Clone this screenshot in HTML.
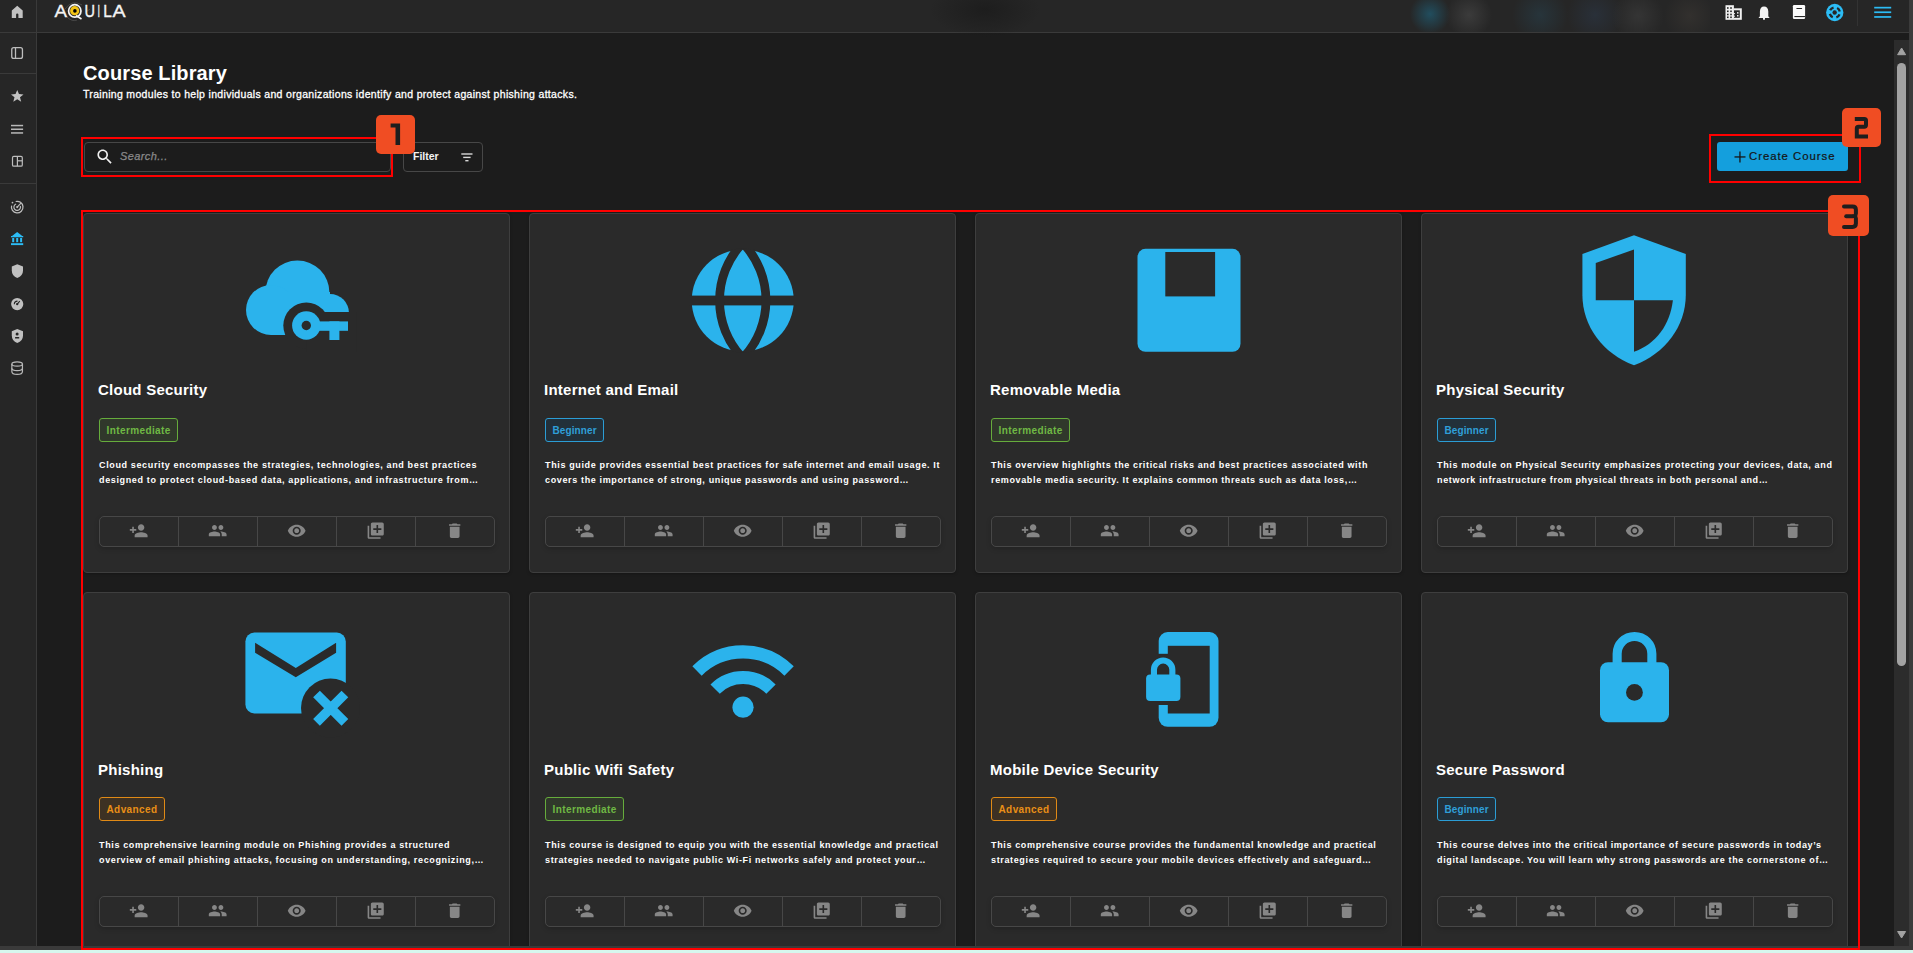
<!DOCTYPE html>
<html><head><meta charset="utf-8">
<style>
*{box-sizing:border-box;margin:0;padding:0}
html,body{width:1913px;height:953px;overflow:hidden;background:#1c1c1c;font-family:"Liberation Sans",sans-serif;color:#fff}
.abs{position:absolute}
#side{left:0;top:0;width:37px;height:946px;background:#262626;border-right:1px solid #3a3a3a}
.hl{position:absolute;left:0;height:1px;background:#3a3a3a}
#hdr{left:37px;top:0;width:1872px;height:33px;background:#262626;border-bottom:1px solid #3a3a3a}
#rstrip{left:1909px;top:0;width:4px;height:953px;background:#3b3b3b}
#bstrip{left:0;top:946px;width:1913px;height:4px;background:#3a3a3a}
#mint{left:0;top:950px;width:1913px;height:3px;background:#d6f7ee}
#sbtrack{left:1894px;top:40px;width:15px;height:906px;background:#2c2c2c}
#thumb{left:1897px;top:63px;width:9px;height:603px;background:#a3a3a3;border-radius:5px}
h1{position:absolute;left:83px;top:61px;font-size:20px;font-weight:700;line-height:24px;white-space:nowrap;letter-spacing:0.12px}
.sub{position:absolute;left:83px;top:88px;font-size:10.5px;line-height:13px;white-space:nowrap;letter-spacing:0.32px;-webkit-text-stroke:0.3px #fff}
.search{left:84px;top:142px;width:307px;height:30px;border:1px solid #474747;border-radius:4px;background:#1c1c1c}
.filter{left:403px;top:142px;width:80px;height:30px;border:1px solid #474747;border-radius:4px}
.btn{left:1717px;top:142px;width:131px;height:29px;background:#149fdd;border-radius:3px;color:#1c1c1c;font-size:12.5px;line-height:29px}
.card{position:absolute;width:426.5px;height:360px;background:#2a2a2a;border:1px solid #3e3e3e;border-radius:4px;box-shadow:0 1px 3px rgba(0,0,0,.25)}
.card .t{position:absolute;left:14px;top:167px;font-size:15px;font-weight:700;line-height:18px;white-space:nowrap;letter-spacing:0.25px}
.card .b{position:absolute;left:15px;top:204px;height:24px;border:1px solid;border-radius:3px;font-size:10px;font-weight:700;line-height:24px;padding:0 6.5px;white-space:nowrap;letter-spacing:0.4px}
.g{color:#6fb944;border-color:#66ac3c!important;background:#30382b}
.bl{color:#2f9fd8;border-color:#2b9dd5!important;background:#22303a}
.o{color:#e98f17;border-color:#e08a16!important;background:#3d3123}
.card .d{position:absolute;left:15px;top:244px;white-space:nowrap;font-size:9px;font-weight:700;line-height:15.2px;letter-spacing:0.64px}
.card .ab{position:absolute;left:15px;top:302px;width:396px;height:31px;border:1px solid #474747;border-radius:5px;display:flex;box-shadow:0 2px 5px rgba(0,0,0,.18)}
.card .ab div{flex:1;border-right:1px solid #474747;display:flex;align-items:center;justify-content:center}
.card .ab div:last-child{border-right:none}
.card .ic{position:absolute;left:0;top:0}
.r2 .t,.r2 .d,.r2 .ab{margin-top:1px}
.bl{letter-spacing:0.1px!important}
.red{position:absolute;border:2px solid #ff0000}
.num{position:absolute;background:#f04e23;border-radius:5px}
</style></head><body>
<div id="side" class="abs"></div>
<div class="hl" style="top:32px;width:37px"></div>
<div class="hl" style="top:73px;width:37px"></div>
<div class="hl" style="top:183px;width:37px"></div>
<div id="hdr" class="abs"></div>
<div id="rstrip" class="abs"></div>
<div id="sbtrack" class="abs"></div>
<div id="thumb" class="abs"></div>
<div id="bstrip" class="abs"></div>
<div id="mint" class="abs"></div>


<!-- sidebar icons -->
<svg class="abs" style="left:0;top:0" width="37" height="400" viewBox="0 0 37 400">
<g fill="#c2c2c2">
<path d="M11.8 10.6 L17.25 5.7 L22.7 10.6 V17.9 H18.4 V14.6 Q18.4 13.6 17.25 13.6 Q16.1 13.6 16.1 14.6 V17.9 H11.8 Z"/>
</g>
<g fill="none" stroke="#bdbdbd" stroke-width="1.3">
<rect x="11.75" y="47.65" width="10.7" height="10.8" rx="2"/>
<line x1="15.5" y1="47.6" x2="15.5" y2="58.5"/>
</g>
<path fill="#c2c2c2" d="M17.25 89.9 L18.95 94.1 L23.5 94.4 L20 97.3 L21.2 101.8 L17.25 99.3 L13.3 101.8 L14.5 97.3 L11 94.4 L15.55 94.1 Z"/>
<g fill="#b8b8b8"><rect x="11" y="124.8" width="12.1" height="1.5"/><rect x="11" y="128.5" width="12.1" height="1.5"/><rect x="11" y="132.2" width="12.1" height="1.5"/></g>
<g fill="none" stroke="#bdbdbd" stroke-width="1.2">
<rect x="12.5" y="156.4" width="9.8" height="9.8" rx="1.3"/>
<line x1="17.4" y1="156.4" x2="17.4" y2="166.2"/><line x1="17.4" y1="160.8" x2="22.3" y2="160.8"/>
</g>
<g><path d="M15.7 201.5 A5.8 5.8 0 1 1 11.6 205.6" fill="none" stroke="#bdbdbd" stroke-width="1.25"/>
<path d="M20.3 206 A3.3 3.3 0 1 1 16.1 204" fill="none" stroke="#bdbdbd" stroke-width="1.2"/>
<line x1="17.2" y1="207.1" x2="21.2" y2="202.8" stroke="#bdbdbd" stroke-width="1.2"/>
</g>
<circle cx="17.2" cy="207.1" r="1.1" fill="#bdbdbd"/><circle cx="12.5" cy="202.6" r="0.9" fill="#bdbdbd"/>
<g fill="#2cbcf5">
<path d="M11 236.8 L17.2 231.9 L23.2 236.8 Z"/><rect x="11" y="236" width="12.2" height="1.3"/>
<rect x="12.2" y="238" width="2" height="4.2"/><rect x="16.2" y="238" width="2" height="4.2"/><rect x="20.1" y="238" width="2" height="4.2"/>
<rect x="11" y="243.2" width="12.2" height="1.9"/>
</g>
<path fill="#c0c0c0" d="M17.25 264.3 L23 266.6 V270.6 Q23 276 17.25 277.9 Q11.8 276 11.8 270.6 V266.6 Z"/>
<circle cx="17.2" cy="304.1" r="6.1" fill="#c0c0c0"/>
<g fill="none" stroke="#262626" stroke-width="1.1"><path d="M14.3 304.3 A3.2 3.2 0 0 1 17.5 301.1"/><line x1="17.2" y1="304.1" x2="19.8" y2="301.2"/></g>
<circle cx="17.2" cy="304.1" r="1.2" fill="#262626"/>
<path fill="#c0c0c0" d="M17.25 329 L23 331.2 V335.4 Q23 340.9 17.25 342.9 Q11.8 340.9 11.8 335.4 V331.2 Z"/>
<circle cx="17.1" cy="333.9" r="1.5" fill="#262626"/><rect x="15" y="337" width="4.3" height="1.5" rx="0.6" fill="#262626"/>
<g fill="none" stroke="#b8b8b8" stroke-width="1.2">
<ellipse cx="17.15" cy="364" rx="5.3" ry="2.2"/>
<path d="M11.85 364 V371.5 Q11.85 374.4 17.15 374.4 Q22.45 374.4 22.45 371.5 V364"/>
<path d="M11.85 368.2 Q11.85 370.6 17.15 370.6 Q22.45 370.6 22.45 368.2"/>
</g>
</svg>

<!-- logo -->
<svg class="abs" style="left:50px;top:0" width="80" height="26" viewBox="0 0 80 26">
<g fill="none" stroke="#6b6b6b" stroke-width="0.6" opacity="0.8"><path d="M15 9 Q22 -1 32 5"/><path d="M17 17 Q22 22 27 20"/><path d="M36 12 L40 9"/></g>
<g font-family="Liberation Sans" font-size="16.8" fill="#f4f4f4" stroke="#f4f4f4" stroke-width="0.35">
<text x="4.4" y="16.9" textLength="12.5" lengthAdjust="spacingAndGlyphs">A</text>
<text x="34.5" y="16.9" textLength="10.5" lengthAdjust="spacingAndGlyphs">U</text>
<text x="47.4" y="16.9" textLength="2.5" lengthAdjust="spacingAndGlyphs">I</text>
<text x="53.3" y="16.9" textLength="8.6" lengthAdjust="spacingAndGlyphs">L</text>
<text x="62.5" y="16.9" textLength="13.1" lengthAdjust="spacingAndGlyphs">A</text>
</g>
<circle cx="24.8" cy="10.9" r="6.2" fill="none" stroke="#f4f4f4" stroke-width="1.7"/>
<path d="M26 15.5 L31.5 19" stroke="#f4f4f4" stroke-width="1.7"/>
<circle cx="24.7" cy="10.7" r="4.6" fill="#f2c316"/>
<circle cx="24.9" cy="10.9" r="1.8" fill="#000"/>
</svg>

<!-- header blurred blobs -->
<div class="abs" style="left:1400px;top:0;width:310px;height:32px;overflow:hidden">
<div class="abs" style="left:8px;top:-8px;width:44px;height:44px;border-radius:50%;background:radial-gradient(circle,rgba(30,110,140,.55),rgba(30,110,140,0) 65%)"></div>
<div class="abs" style="left:44px;top:-10px;width:50px;height:50px;border-radius:50%;background:radial-gradient(circle,rgba(80,80,80,.5),rgba(80,80,80,0) 65%)"></div>
<div class="abs" style="left:105px;top:-10px;width:70px;height:50px;border-radius:50%;background:radial-gradient(circle,rgba(40,70,85,.45),rgba(40,70,85,0) 65%)"></div>
<div class="abs" style="left:160px;top:-10px;width:70px;height:50px;border-radius:50%;background:radial-gradient(circle,rgba(45,60,80,.45),rgba(45,60,80,0) 65%)"></div>
<div class="abs" style="left:210px;top:-12px;width:56px;height:56px;border-radius:50%;background:radial-gradient(circle,rgba(70,70,70,.45),rgba(70,70,70,0) 65%)"></div>
<div class="abs" style="left:262px;top:-12px;width:56px;height:56px;border-radius:50%;background:radial-gradient(circle,rgba(65,60,55,.45),rgba(65,60,55,0) 65%)"></div>
</div>

<div class="abs" style="left:925px;top:-20px;width:120px;height:60px;border-radius:50%;background:radial-gradient(ellipse,rgba(22,22,22,.55),rgba(22,22,22,0) 65%)"></div>
<!-- header icons -->
<svg class="abs" style="left:1710px;top:0" width="199" height="32" viewBox="1710 0 199 32">
<g fill="#f0f0f0">
<rect x="1725.5" y="5.2" width="8.4" height="14.6"/><rect x="1733.5" y="8.3" width="8.3" height="11.5"/>
</g>
<g fill="#262626">
<rect x="1727" y="7.2" width="1.6" height="1.6"/><rect x="1730.2" y="7.2" width="1.6" height="1.6"/>
<rect x="1727" y="10.5" width="1.6" height="1.6"/><rect x="1730.2" y="10.5" width="1.6" height="1.6"/>
<rect x="1727" y="13.7" width="1.6" height="1.6"/><rect x="1730.2" y="13.7" width="1.6" height="1.6"/>
<rect x="1727" y="16.5" width="1.6" height="1.6"/><rect x="1730.2" y="16.5" width="1.6" height="1.6"/>
<rect x="1734" y="10.3" width="5.8" height="7.5"/>
</g>
<g fill="#f0f0f0"><rect x="1737" y="12.1" width="1.5" height="1.5"/><rect x="1737" y="15" width="1.5" height="1.5"/><rect x="1733.5" y="13" width="1.4" height="1.2"/><rect x="1733.5" y="15.6" width="1.4" height="1.2"/></g>
<path fill="#f4f4f4" d="M1764 6.6 Q1768 6.6 1768.3 11.5 V16.3 L1769.7 17.9 H1758.5 L1759.9 16.3 V11.5 Q1760.2 6.6 1764 6.6 Z"/>
<rect x="1763" y="17.5" width="2" height="2.4" rx="0.8" fill="#f4f4f4"/>
<rect x="1792.9" y="5" width="12.2" height="14" rx="1.2" fill="#fafafa"/>
<rect x="1796.3" y="8" width="5.8" height="1.1" rx="0.5" fill="#262626"/>
<rect x="1794.4" y="16" width="10.7" height="1.1" fill="#262626"/>
<circle cx="1834.75" cy="12.5" r="8.65" fill="#2cbcf5"/>
<circle cx="1834.75" cy="12.5" r="5.1" fill="none" stroke="#262626" stroke-width="2.3" stroke-dasharray="4.3 3.71" stroke-dashoffset="-1.85"/>
<circle cx="1834.65" cy="12.45" r="2.2" fill="#262626"/>
<rect x="1857" y="0" width="1" height="26" fill="#333"/>
<g fill="#2cbcf5"><rect x="1874.2" y="6.8" width="17" height="1.7"/><rect x="1874.2" y="11.4" width="17" height="1.7"/><rect x="1874.2" y="16.1" width="17" height="1.7"/></g>
</svg>

<!-- scrollbar arrows -->
<svg class="abs" style="left:1894px;top:40px" width="15" height="906" viewBox="0 0 15 906">
<path d="M3.6 14.7 L7.6 8 L11.6 14.7 Z" fill="#a3a3a3" stroke="#a3a3a3" stroke-width="1" stroke-linejoin="round"/>
<path d="M3.6 891.5 L7.6 898 L11.6 891.5 Z" fill="#a3a3a3" stroke="#a3a3a3" stroke-width="1" stroke-linejoin="round"/>
</svg>

<h1>Course Library</h1>
<div class="sub">Training modules to help individuals and organizations identify and protect against phishing attacks.</div>

<div class="search abs"><svg class="abs" style="left:9.6px;top:3.7px" width="19.5" height="19.5" viewBox="0 0 24 24"><path fill="#f0f0f0" d="M15.5 14h-.79l-.28-.27C15.41 12.59 16 11.11 16 9.5 16 5.91 13.09 3 9.5 3S3 5.91 3 9.5 5.91 16 9.5 16c1.61 0 3.09-.59 4.23-1.57l.27.28v.79l5 4.99L20.49 19l-4.99-5zm-6 0C7.01 14 5 11.99 5 9.5S7.01 5 9.5 5 14 7.01 14 9.5 11.99 14 9.5 14z"/></svg>
<div class="abs" style="left:35px;top:6px;font-size:11px;font-style:italic;color:#8a8a8a;line-height:14px;letter-spacing:0.4px;-webkit-text-stroke:0.25px #8a8a8a">Search...</div></div>
<div class="filter abs"><div class="abs" style="left:9px;top:6px;font-size:10.5px;font-weight:700;color:#f4f4f4;line-height:14px">Filter</div>
<svg class="abs" style="left:57px;top:10px" width="12" height="9" viewBox="0 0 12 9"><g fill="#d8d8d8"><rect x="0.3" y="0.3" width="11.2" height="1.4"/><rect x="2.2" y="3.7" width="7.4" height="1.4"/><rect x="4.3" y="7" width="3.2" height="1.4"/></g></svg></div>
<div class="btn abs"><svg class="abs" style="left:16.5px;top:8.5px" width="12" height="12" viewBox="0 0 12 12"><g fill="#161616"><rect x="0.5" y="5.3" width="11" height="1.3"/><rect x="5.3" y="0.5" width="1.3" height="11"/></g></svg>
<div class="abs" style="left:32px;top:7px;font-size:11.4px;line-height:14px;letter-spacing:0.95px;color:#141414;white-space:nowrap;-webkit-text-stroke:0.2px #141414">Create Course</div></div>

<div class="abs" style="left:37px;top:33px;width:1857px;height:913px;overflow:hidden"><div class="abs" style="left:-37px;top:-33px;width:1913px;height:953px"><div class="card" style="left:83px;top:213px">
<svg class="ic" width="426" height="170" viewBox="0 0 426 170" style="left:-1px;top:-1px"><circle cx="214.4" cy="79.5" r="32" fill="#2bb3ec"/>
<circle cx="247" cy="100" r="19" fill="#2bb3ec"/>
<circle cx="188" cy="97" r="25" fill="#2bb3ec"/>
<rect x="188" y="79" width="59" height="43" fill="#2bb3ec"/>
<circle cx="223.3" cy="112.5" r="23" fill="#2a2a2a"/>
<rect x="223.3" y="99" width="50" height="40" fill="#2a2a2a"/>
<rect x="223.3" y="108.4" width="41.7" height="9.4" fill="#2bb3ec"/>
<circle cx="223.3" cy="112.5" r="14.2" fill="#2bb3ec"/>
<circle cx="223.3" cy="112.5" r="4.7" fill="#2a2a2a"/>
<rect x="246.4" y="108.4" width="10" height="18.6" fill="#2bb3ec"/></svg>
<div class="t">Cloud Security</div>
<div class="b g">Intermediate</div>
<div class="d">Cloud security encompasses the strategies, technologies, and best practices<br>designed to protect cloud-based data, applications, and infrastructure from&hellip;</div>
<div class="ab"><div><svg width="19.4" height="19.4" viewBox="0 0 24 24" style="margin-top:-1px"><path d="M15 12c2.21 0 4-1.79 4-4s-1.79-4-4-4-4 1.79-4 4 1.79 4 4 4zm-9-2V7H4v3H1v2h3v3h2v-3h3v-2H6zm9 4c-2.67 0-8 1.34-8 4v2h16v-2c0-2.66-5.33-4-8-4z" fill="#868686"/></svg></div><div><svg width="19.4" height="19.4" viewBox="0 0 24 24" style="margin-top:-1px"><path d="M16 11c1.66 0 2.99-1.34 2.99-3S17.66 5 16 5c-1.66 0-3 1.34-3 3s1.34 3 3 3zm-8 0c1.66 0 2.99-1.34 2.99-3S9.66 5 8 5C6.34 5 5 6.34 5 8s1.34 3 3 3zm0 2c-2.33 0-7 1.17-7 3.5V19h14v-2.5c0-2.33-4.67-3.5-7-3.5zm8 0c-.29 0-.62.02-.97.05 1.16.84 1.970 1.97 1.97 3.45V19h6v-2.5c0-2.33-4.67-3.5-7-3.5z" fill="#868686"/></svg></div><div><svg width="19.4" height="19.4" viewBox="0 0 24 24" style="margin-top:-1px"><path d="M12 4.5C7 4.5 2.73 7.61 1 12c1.73 4.39 6 7.5 11 7.5s9.27-3.11 11-7.5c-1.73-4.39-6-7.5-11-7.5zM12 17c-2.76 0-5-2.24-5-5s2.24-5 5-5 5 2.24 5 5-2.24 5-5 5zm0-8c-1.66 0-3 1.34-3 3s1.34 3 3 3 3-1.34 3-3-1.34-3-3-3z" fill="#868686"/></svg></div><div><svg width="19.4" height="19.4" viewBox="0 0 24 24" style="margin-top:-1px"><path d="M4 6H2v14c0 1.1.9 2 2 2h14v-2H4V6zm16-4H8c-1.1 0-2 .9-2 2v12c0 1.1.9 2 2 2h12c1.1 0 2-.9 2-2V4c0-1.1-.9-2-2-2zm-1 9h-4v4h-2v-4H9V9h4V5h2v4h4v2z" fill="#868686"/></svg></div><div><svg width="19.4" height="19.4" viewBox="0 0 24 24" style="margin-top:-1px"><path d="M6 19c0 1.1.9 2 2 2h8c1.1 0 2-.9 2-2V7H6v12zM19 4h-3.5l-1-1h-5l-1 1H5v2h14V4z" fill="#868686"/></svg></div></div>
</div>
<div class="card" style="left:529px;top:213px">
<svg class="ic" width="426" height="170" viewBox="0 0 426 170" style="left:-0.75px;top:-1px"><circle cx="213.75" cy="87.5" r="51" fill="#2bb3ec"/>
<rect x="160" y="82.6" width="108" height="9.8" fill="#2a2a2a"/>
<g clip-path="url(#gclip)"><circle cx="273.55" cy="87.5" r="83" fill="none" stroke="#2a2a2a" stroke-width="8.8"/>
<circle cx="153.95" cy="87.5" r="83" fill="none" stroke="#2a2a2a" stroke-width="8.8"/></g>
<defs><clipPath id="gclip"><circle cx="213.75" cy="87.5" r="52"/></clipPath></defs></svg>
<div class="t">Internet and Email</div>
<div class="b bl">Beginner</div>
<div class="d">This guide provides essential best practices for safe internet and email usage. It<br>covers the importance of strong, unique passwords and using password&hellip;</div>
<div class="ab"><div><svg width="19.4" height="19.4" viewBox="0 0 24 24" style="margin-top:-1px"><path d="M15 12c2.21 0 4-1.79 4-4s-1.79-4-4-4-4 1.79-4 4 1.79 4 4 4zm-9-2V7H4v3H1v2h3v3h2v-3h3v-2H6zm9 4c-2.67 0-8 1.34-8 4v2h16v-2c0-2.66-5.33-4-8-4z" fill="#868686"/></svg></div><div><svg width="19.4" height="19.4" viewBox="0 0 24 24" style="margin-top:-1px"><path d="M16 11c1.66 0 2.99-1.34 2.99-3S17.66 5 16 5c-1.66 0-3 1.34-3 3s1.34 3 3 3zm-8 0c1.66 0 2.99-1.34 2.99-3S9.66 5 8 5C6.34 5 5 6.34 5 8s1.34 3 3 3zm0 2c-2.33 0-7 1.17-7 3.5V19h14v-2.5c0-2.33-4.67-3.5-7-3.5zm8 0c-.29 0-.62.02-.97.05 1.16.84 1.970 1.97 1.97 3.45V19h6v-2.5c0-2.33-4.67-3.5-7-3.5z" fill="#868686"/></svg></div><div><svg width="19.4" height="19.4" viewBox="0 0 24 24" style="margin-top:-1px"><path d="M12 4.5C7 4.5 2.73 7.61 1 12c1.73 4.39 6 7.5 11 7.5s9.27-3.11 11-7.5c-1.73-4.39-6-7.5-11-7.5zM12 17c-2.76 0-5-2.24-5-5s2.24-5 5-5 5 2.24 5 5-2.24 5-5 5zm0-8c-1.66 0-3 1.34-3 3s1.34 3 3 3 3-1.34 3-3-1.34-3-3-3z" fill="#868686"/></svg></div><div><svg width="19.4" height="19.4" viewBox="0 0 24 24" style="margin-top:-1px"><path d="M4 6H2v14c0 1.1.9 2 2 2h14v-2H4V6zm16-4H8c-1.1 0-2 .9-2 2v12c0 1.1.9 2 2 2h12c1.1 0 2-.9 2-2V4c0-1.1-.9-2-2-2zm-1 9h-4v4h-2v-4H9V9h4V5h2v4h4v2z" fill="#868686"/></svg></div><div><svg width="19.4" height="19.4" viewBox="0 0 24 24" style="margin-top:-1px"><path d="M6 19c0 1.1.9 2 2 2h8c1.1 0 2-.9 2-2V7H6v12zM19 4h-3.5l-1-1h-5l-1 1H5v2h14V4z" fill="#868686"/></svg></div></div>
</div>
<div class="card" style="left:975px;top:213px">
<svg class="ic" width="426" height="170" viewBox="0 0 426 170" style="left:-0.5px;top:-1px"><rect x="161.5" y="35.8" width="103" height="103" rx="8" fill="#2bb3ec"/>
<rect x="189.3" y="39" width="49.8" height="44.4" fill="#2a2a2a"/></svg>
<div class="t">Removable Media</div>
<div class="b g">Intermediate</div>
<div class="d">This overview highlights the critical risks and best practices associated with<br>removable media security. It explains common threats such as data loss,&hellip;</div>
<div class="ab"><div><svg width="19.4" height="19.4" viewBox="0 0 24 24" style="margin-top:-1px"><path d="M15 12c2.21 0 4-1.79 4-4s-1.79-4-4-4-4 1.79-4 4 1.79 4 4 4zm-9-2V7H4v3H1v2h3v3h2v-3h3v-2H6zm9 4c-2.67 0-8 1.34-8 4v2h16v-2c0-2.66-5.33-4-8-4z" fill="#868686"/></svg></div><div><svg width="19.4" height="19.4" viewBox="0 0 24 24" style="margin-top:-1px"><path d="M16 11c1.66 0 2.99-1.34 2.99-3S17.66 5 16 5c-1.66 0-3 1.34-3 3s1.34 3 3 3zm-8 0c1.66 0 2.99-1.34 2.99-3S9.66 5 8 5C6.34 5 5 6.34 5 8s1.34 3 3 3zm0 2c-2.33 0-7 1.17-7 3.5V19h14v-2.5c0-2.33-4.67-3.5-7-3.5zm8 0c-.29 0-.62.02-.97.05 1.16.84 1.970 1.97 1.97 3.45V19h6v-2.5c0-2.33-4.67-3.5-7-3.5z" fill="#868686"/></svg></div><div><svg width="19.4" height="19.4" viewBox="0 0 24 24" style="margin-top:-1px"><path d="M12 4.5C7 4.5 2.73 7.61 1 12c1.73 4.39 6 7.5 11 7.5s9.27-3.11 11-7.5c-1.73-4.39-6-7.5-11-7.5zM12 17c-2.76 0-5-2.24-5-5s2.24-5 5-5 5 2.24 5 5-2.24 5-5 5zm0-8c-1.66 0-3 1.34-3 3s1.34 3 3 3 3-1.34 3-3-1.34-3-3-3z" fill="#868686"/></svg></div><div><svg width="19.4" height="19.4" viewBox="0 0 24 24" style="margin-top:-1px"><path d="M4 6H2v14c0 1.1.9 2 2 2h14v-2H4V6zm16-4H8c-1.1 0-2 .9-2 2v12c0 1.1.9 2 2 2h12c1.1 0 2-.9 2-2V4c0-1.1-.9-2-2-2zm-1 9h-4v4h-2v-4H9V9h4V5h2v4h4v2z" fill="#868686"/></svg></div><div><svg width="19.4" height="19.4" viewBox="0 0 24 24" style="margin-top:-1px"><path d="M6 19c0 1.1.9 2 2 2h8c1.1 0 2-.9 2-2V7H6v12zM19 4h-3.5l-1-1h-5l-1 1H5v2h14V4z" fill="#868686"/></svg></div></div>
</div>
<div class="card" style="left:1421px;top:213px">
<svg class="ic" width="426" height="170" viewBox="0 0 426 170" style="left:-0.25px;top:-1px"><path d="M212 22.2 L263.8 41.1 V82 C263.8 113 243 141 212 152.2 C181 141 160.4 113 160.4 82 V41.1 Z" fill="#2bb3ec"/>
<path d="M173.75 50.1 L212 36.4 V87.3 H173.75 Z" fill="#2a2a2a"/>
<path d="M212 87.3 H250.9 C248 112 234 131 212 138.8 Z" fill="#2a2a2a"/></svg>
<div class="t">Physical Security</div>
<div class="b bl">Beginner</div>
<div class="d">This module on Physical Security emphasizes protecting your devices, data, and<br>network infrastructure from physical threats in both personal and&hellip;</div>
<div class="ab"><div><svg width="19.4" height="19.4" viewBox="0 0 24 24" style="margin-top:-1px"><path d="M15 12c2.21 0 4-1.79 4-4s-1.79-4-4-4-4 1.79-4 4 1.79 4 4 4zm-9-2V7H4v3H1v2h3v3h2v-3h3v-2H6zm9 4c-2.67 0-8 1.34-8 4v2h16v-2c0-2.66-5.33-4-8-4z" fill="#868686"/></svg></div><div><svg width="19.4" height="19.4" viewBox="0 0 24 24" style="margin-top:-1px"><path d="M16 11c1.66 0 2.99-1.34 2.99-3S17.66 5 16 5c-1.66 0-3 1.34-3 3s1.34 3 3 3zm-8 0c1.66 0 2.99-1.34 2.99-3S9.66 5 8 5C6.34 5 5 6.34 5 8s1.34 3 3 3zm0 2c-2.33 0-7 1.17-7 3.5V19h14v-2.5c0-2.33-4.67-3.5-7-3.5zm8 0c-.29 0-.62.02-.97.05 1.16.84 1.970 1.97 1.97 3.45V19h6v-2.5c0-2.33-4.67-3.5-7-3.5z" fill="#868686"/></svg></div><div><svg width="19.4" height="19.4" viewBox="0 0 24 24" style="margin-top:-1px"><path d="M12 4.5C7 4.5 2.73 7.61 1 12c1.73 4.39 6 7.5 11 7.5s9.27-3.11 11-7.5c-1.73-4.39-6-7.5-11-7.5zM12 17c-2.76 0-5-2.24-5-5s2.24-5 5-5 5 2.24 5 5-2.24 5-5 5zm0-8c-1.66 0-3 1.34-3 3s1.34 3 3 3 3-1.34 3-3-1.34-3-3-3z" fill="#868686"/></svg></div><div><svg width="19.4" height="19.4" viewBox="0 0 24 24" style="margin-top:-1px"><path d="M4 6H2v14c0 1.1.9 2 2 2h14v-2H4V6zm16-4H8c-1.1 0-2 .9-2 2v12c0 1.1.9 2 2 2h12c1.1 0 2-.9 2-2V4c0-1.1-.9-2-2-2zm-1 9h-4v4h-2v-4H9V9h4V5h2v4h4v2z" fill="#868686"/></svg></div><div><svg width="19.4" height="19.4" viewBox="0 0 24 24" style="margin-top:-1px"><path d="M6 19c0 1.1.9 2 2 2h8c1.1 0 2-.9 2-2V7H6v12zM19 4h-3.5l-1-1h-5l-1 1H5v2h14V4z" fill="#868686"/></svg></div></div>
</div>
<div class="card r2" style="left:83px;top:592px">
<svg class="ic" width="426" height="170" viewBox="0 0 426 170" style="left:-1px;top:-1px"><rect x="162.4" y="40.6" width="100.4" height="80.8" rx="9" fill="#2bb3ec"/>
<path d="M172.1 50.7 L212.8 75.9 L253.1 50.7 L253.1 60.7 L212.8 85.3 L172.1 60.7 Z" fill="#2a2a2a"/>
<circle cx="247.5" cy="116" r="29.5" fill="#2a2a2a"/>
<path d="M233.5 102 L261.9 130.4 M261.9 102 L233.5 130.4" stroke="#2bb3ec" stroke-width="9.5"/></svg>
<div class="t">Phishing</div>
<div class="b o">Advanced</div>
<div class="d">This comprehensive learning module on Phishing provides a structured<br>overview of email phishing attacks, focusing on understanding, recognizing,&hellip;</div>
<div class="ab"><div><svg width="19.4" height="19.4" viewBox="0 0 24 24" style="margin-top:-1px"><path d="M15 12c2.21 0 4-1.79 4-4s-1.79-4-4-4-4 1.79-4 4 1.79 4 4 4zm-9-2V7H4v3H1v2h3v3h2v-3h3v-2H6zm9 4c-2.67 0-8 1.34-8 4v2h16v-2c0-2.66-5.33-4-8-4z" fill="#868686"/></svg></div><div><svg width="19.4" height="19.4" viewBox="0 0 24 24" style="margin-top:-1px"><path d="M16 11c1.66 0 2.99-1.34 2.99-3S17.66 5 16 5c-1.66 0-3 1.34-3 3s1.34 3 3 3zm-8 0c1.66 0 2.99-1.34 2.99-3S9.66 5 8 5C6.34 5 5 6.34 5 8s1.34 3 3 3zm0 2c-2.33 0-7 1.17-7 3.5V19h14v-2.5c0-2.33-4.67-3.5-7-3.5zm8 0c-.29 0-.62.02-.97.05 1.16.84 1.970 1.97 1.97 3.45V19h6v-2.5c0-2.33-4.67-3.5-7-3.5z" fill="#868686"/></svg></div><div><svg width="19.4" height="19.4" viewBox="0 0 24 24" style="margin-top:-1px"><path d="M12 4.5C7 4.5 2.73 7.61 1 12c1.73 4.39 6 7.5 11 7.5s9.27-3.11 11-7.5c-1.73-4.39-6-7.5-11-7.5zM12 17c-2.76 0-5-2.24-5-5s2.24-5 5-5 5 2.24 5 5-2.24 5-5 5zm0-8c-1.66 0-3 1.34-3 3s1.34 3 3 3 3-1.34 3-3-1.34-3-3-3z" fill="#868686"/></svg></div><div><svg width="19.4" height="19.4" viewBox="0 0 24 24" style="margin-top:-1px"><path d="M4 6H2v14c0 1.1.9 2 2 2h14v-2H4V6zm16-4H8c-1.1 0-2 .9-2 2v12c0 1.1.9 2 2 2h12c1.1 0 2-.9 2-2V4c0-1.1-.9-2-2-2zm-1 9h-4v4h-2v-4H9V9h4V5h2v4h4v2z" fill="#868686"/></svg></div><div><svg width="19.4" height="19.4" viewBox="0 0 24 24" style="margin-top:-1px"><path d="M6 19c0 1.1.9 2 2 2h8c1.1 0 2-.9 2-2V7H6v12zM19 4h-3.5l-1-1h-5l-1 1H5v2h14V4z" fill="#868686"/></svg></div></div>
</div>
<div class="card r2" style="left:529px;top:592px">
<svg class="ic" width="426" height="170" viewBox="0 0 426 170" style="left:-0.75px;top:-1px"><path d="M168.02 78.97 A65.1 65.1 0 0 1 260.08 78.97" fill="none" stroke="#2bb3ec" stroke-width="13.2"/>
<path d="M186.12 97.07 A39.5 39.5 0 0 1 241.98 97.07" fill="none" stroke="#2bb3ec" stroke-width="13.2"/>
<circle cx="214.05" cy="115.2" r="10.6" fill="#2bb3ec"/></svg>
<div class="t">Public Wifi Safety</div>
<div class="b g">Intermediate</div>
<div class="d">This course is designed to equip you with the essential knowledge and practical<br>strategies needed to navigate public Wi-Fi networks safely and protect your&hellip;</div>
<div class="ab"><div><svg width="19.4" height="19.4" viewBox="0 0 24 24" style="margin-top:-1px"><path d="M15 12c2.21 0 4-1.79 4-4s-1.79-4-4-4-4 1.79-4 4 1.79 4 4 4zm-9-2V7H4v3H1v2h3v3h2v-3h3v-2H6zm9 4c-2.67 0-8 1.34-8 4v2h16v-2c0-2.66-5.33-4-8-4z" fill="#868686"/></svg></div><div><svg width="19.4" height="19.4" viewBox="0 0 24 24" style="margin-top:-1px"><path d="M16 11c1.66 0 2.99-1.34 2.99-3S17.66 5 16 5c-1.66 0-3 1.34-3 3s1.34 3 3 3zm-8 0c1.66 0 2.99-1.34 2.99-3S9.66 5 8 5C6.34 5 5 6.34 5 8s1.34 3 3 3zm0 2c-2.33 0-7 1.17-7 3.5V19h14v-2.5c0-2.33-4.67-3.5-7-3.5zm8 0c-.29 0-.62.02-.97.05 1.16.84 1.970 1.97 1.97 3.45V19h6v-2.5c0-2.33-4.67-3.5-7-3.5z" fill="#868686"/></svg></div><div><svg width="19.4" height="19.4" viewBox="0 0 24 24" style="margin-top:-1px"><path d="M12 4.5C7 4.5 2.73 7.61 1 12c1.73 4.39 6 7.5 11 7.5s9.27-3.11 11-7.5c-1.73-4.39-6-7.5-11-7.5zM12 17c-2.76 0-5-2.24-5-5s2.24-5 5-5 5 2.24 5 5-2.24 5-5 5zm0-8c-1.66 0-3 1.34-3 3s1.34 3 3 3 3-1.34 3-3-1.34-3-3-3z" fill="#868686"/></svg></div><div><svg width="19.4" height="19.4" viewBox="0 0 24 24" style="margin-top:-1px"><path d="M4 6H2v14c0 1.1.9 2 2 2h14v-2H4V6zm16-4H8c-1.1 0-2 .9-2 2v12c0 1.1.9 2 2 2h12c1.1 0 2-.9 2-2V4c0-1.1-.9-2-2-2zm-1 9h-4v4h-2v-4H9V9h4V5h2v4h4v2z" fill="#868686"/></svg></div><div><svg width="19.4" height="19.4" viewBox="0 0 24 24" style="margin-top:-1px"><path d="M6 19c0 1.1.9 2 2 2h8c1.1 0 2-.9 2-2V7H6v12zM19 4h-3.5l-1-1h-5l-1 1H5v2h14V4z" fill="#868686"/></svg></div></div>
</div>
<div class="card r2" style="left:975px;top:592px">
<svg class="ic" width="426" height="170" viewBox="0 0 426 170" style="left:-0.5px;top:-1px"><rect x="182.7" y="40" width="59.8" height="94.8" rx="9" fill="#2bb3ec"/>
<rect x="191.8" y="53.8" width="41.9" height="67.7" fill="#2a2a2a"/>
<rect x="180" y="61.8" width="12" height="51.2" fill="#2a2a2a"/>
<path d="M177.95 83 V77.75 A9.2 9.2 0 0 1 196.35 77.75 V83" fill="none" stroke="#2bb3ec" stroke-width="6.1"/>
<rect x="170.1" y="82.4" width="34.3" height="26.5" rx="4" fill="#2bb3ec"/></svg>
<div class="t">Mobile Device Security</div>
<div class="b o">Advanced</div>
<div class="d">This comprehensive course provides the fundamental knowledge and practical<br>strategies required to secure your mobile devices effectively and safeguard&hellip;</div>
<div class="ab"><div><svg width="19.4" height="19.4" viewBox="0 0 24 24" style="margin-top:-1px"><path d="M15 12c2.21 0 4-1.79 4-4s-1.79-4-4-4-4 1.79-4 4 1.79 4 4 4zm-9-2V7H4v3H1v2h3v3h2v-3h3v-2H6zm9 4c-2.67 0-8 1.34-8 4v2h16v-2c0-2.66-5.33-4-8-4z" fill="#868686"/></svg></div><div><svg width="19.4" height="19.4" viewBox="0 0 24 24" style="margin-top:-1px"><path d="M16 11c1.66 0 2.99-1.34 2.99-3S17.66 5 16 5c-1.66 0-3 1.34-3 3s1.34 3 3 3zm-8 0c1.66 0 2.99-1.34 2.99-3S9.66 5 8 5C6.34 5 5 6.34 5 8s1.34 3 3 3zm0 2c-2.33 0-7 1.17-7 3.5V19h14v-2.5c0-2.33-4.67-3.5-7-3.5zm8 0c-.29 0-.62.02-.97.05 1.16.84 1.970 1.97 1.97 3.45V19h6v-2.5c0-2.33-4.67-3.5-7-3.5z" fill="#868686"/></svg></div><div><svg width="19.4" height="19.4" viewBox="0 0 24 24" style="margin-top:-1px"><path d="M12 4.5C7 4.5 2.73 7.61 1 12c1.73 4.39 6 7.5 11 7.5s9.27-3.11 11-7.5c-1.73-4.39-6-7.5-11-7.5zM12 17c-2.76 0-5-2.24-5-5s2.24-5 5-5 5 2.24 5 5-2.24 5-5 5zm0-8c-1.66 0-3 1.34-3 3s1.34 3 3 3 3-1.34 3-3-1.34-3-3-3z" fill="#868686"/></svg></div><div><svg width="19.4" height="19.4" viewBox="0 0 24 24" style="margin-top:-1px"><path d="M4 6H2v14c0 1.1.9 2 2 2h14v-2H4V6zm16-4H8c-1.1 0-2 .9-2 2v12c0 1.1.9 2 2 2h12c1.1 0 2-.9 2-2V4c0-1.1-.9-2-2-2zm-1 9h-4v4h-2v-4H9V9h4V5h2v4h4v2z" fill="#868686"/></svg></div><div><svg width="19.4" height="19.4" viewBox="0 0 24 24" style="margin-top:-1px"><path d="M6 19c0 1.1.9 2 2 2h8c1.1 0 2-.9 2-2V7H6v12zM19 4h-3.5l-1-1h-5l-1 1H5v2h14V4z" fill="#868686"/></svg></div></div>
</div>
<div class="card r2" style="left:1421px;top:592px">
<svg class="ic" width="426" height="170" viewBox="0 0 426 170" style="left:-0.25px;top:-1px"><path d="M195.15 72 V61.85 A17.35 17.35 0 0 1 229.85 61.85 V72" fill="none" stroke="#2bb3ec" stroke-width="9.1"/>
<rect x="178" y="70.2" width="69" height="60.1" rx="8" fill="#2bb3ec"/>
<circle cx="212.45" cy="100.4" r="8.4" fill="#2a2a2a"/></svg>
<div class="t">Secure Password</div>
<div class="b bl">Beginner</div>
<div class="d">This course delves into the critical importance of secure passwords in today&rsquo;s<br>digital landscape. You will learn why strong passwords are the cornerstone of&hellip;</div>
<div class="ab"><div><svg width="19.4" height="19.4" viewBox="0 0 24 24" style="margin-top:-1px"><path d="M15 12c2.21 0 4-1.79 4-4s-1.79-4-4-4-4 1.79-4 4 1.79 4 4 4zm-9-2V7H4v3H1v2h3v3h2v-3h3v-2H6zm9 4c-2.67 0-8 1.34-8 4v2h16v-2c0-2.66-5.33-4-8-4z" fill="#868686"/></svg></div><div><svg width="19.4" height="19.4" viewBox="0 0 24 24" style="margin-top:-1px"><path d="M16 11c1.66 0 2.99-1.34 2.99-3S17.66 5 16 5c-1.66 0-3 1.34-3 3s1.34 3 3 3zm-8 0c1.66 0 2.99-1.34 2.99-3S9.66 5 8 5C6.34 5 5 6.34 5 8s1.34 3 3 3zm0 2c-2.33 0-7 1.17-7 3.5V19h14v-2.5c0-2.33-4.67-3.5-7-3.5zm8 0c-.29 0-.62.02-.97.05 1.16.84 1.970 1.97 1.97 3.45V19h6v-2.5c0-2.33-4.67-3.5-7-3.5z" fill="#868686"/></svg></div><div><svg width="19.4" height="19.4" viewBox="0 0 24 24" style="margin-top:-1px"><path d="M12 4.5C7 4.5 2.73 7.61 1 12c1.73 4.39 6 7.5 11 7.5s9.27-3.11 11-7.5c-1.73-4.39-6-7.5-11-7.5zM12 17c-2.76 0-5-2.24-5-5s2.24-5 5-5 5 2.24 5 5-2.24 5-5 5zm0-8c-1.66 0-3 1.34-3 3s1.34 3 3 3 3-1.34 3-3-1.34-3-3-3z" fill="#868686"/></svg></div><div><svg width="19.4" height="19.4" viewBox="0 0 24 24" style="margin-top:-1px"><path d="M4 6H2v14c0 1.1.9 2 2 2h14v-2H4V6zm16-4H8c-1.1 0-2 .9-2 2v12c0 1.1.9 2 2 2h12c1.1 0 2-.9 2-2V4c0-1.1-.9-2-2-2zm-1 9h-4v4h-2v-4H9V9h4V5h2v4h4v2z" fill="#868686"/></svg></div><div><svg width="19.4" height="19.4" viewBox="0 0 24 24" style="margin-top:-1px"><path d="M6 19c0 1.1.9 2 2 2h8c1.1 0 2-.9 2-2V7H6v12zM19 4h-3.5l-1-1h-5l-1 1H5v2h14V4z" fill="#868686"/></svg></div></div>
</div></div></div>


<!-- annotations -->
<div class="red" style="left:81px;top:137px;width:312px;height:40px"></div>
<div class="red" style="left:1709px;top:134px;width:152px;height:49px"></div>
<div class="red" style="left:81px;top:210px;width:1779px;height:740px"></div>
<svg class="abs" style="left:376px;top:115px" width="39" height="39" viewBox="0 0 39 39"><rect width="39" height="39" rx="5" fill="#f04d23"/>
<path d="M14.6 8.6 H24.1 V30.1 H19.5 V12.6 H14.6 Z" fill="#1e1e1e"/></svg>
<svg class="abs" style="left:1842px;top:108px" width="39" height="39" viewBox="0 0 39 39"><rect width="39" height="39" rx="5" fill="#f04d23"/>
<path d="M12.8 9 H22.3 Q26 9 26 12.7 V17.1 Q26 20.8 22.3 20.8 H16.8 V26.6 H26 V30.6 H12.8 V20.5 Q12.8 16.8 16.5 16.8 H22 V13 H12.8 Z" fill="#1e1e1e"/></svg>
<svg class="abs" style="left:1828px;top:195px" width="41" height="41" viewBox="0 0 41 41"><rect width="41" height="41" rx="5" fill="#f04d23"/>
<path d="M16 11.4 H24.5 Q27.9 11.4 27.9 14.8 V18.6 Q27.9 20.5 26.6 21 Q27.9 21.6 27.9 23.5 V28.6 Q27.9 32 24.5 32 H16" fill="none" stroke="#1e1e1e" stroke-width="4" stroke-linecap="round"/>
<path d="M18.2 21.2 H25" stroke="#1e1e1e" stroke-width="4" stroke-linecap="round"/></svg>
</body></html>
